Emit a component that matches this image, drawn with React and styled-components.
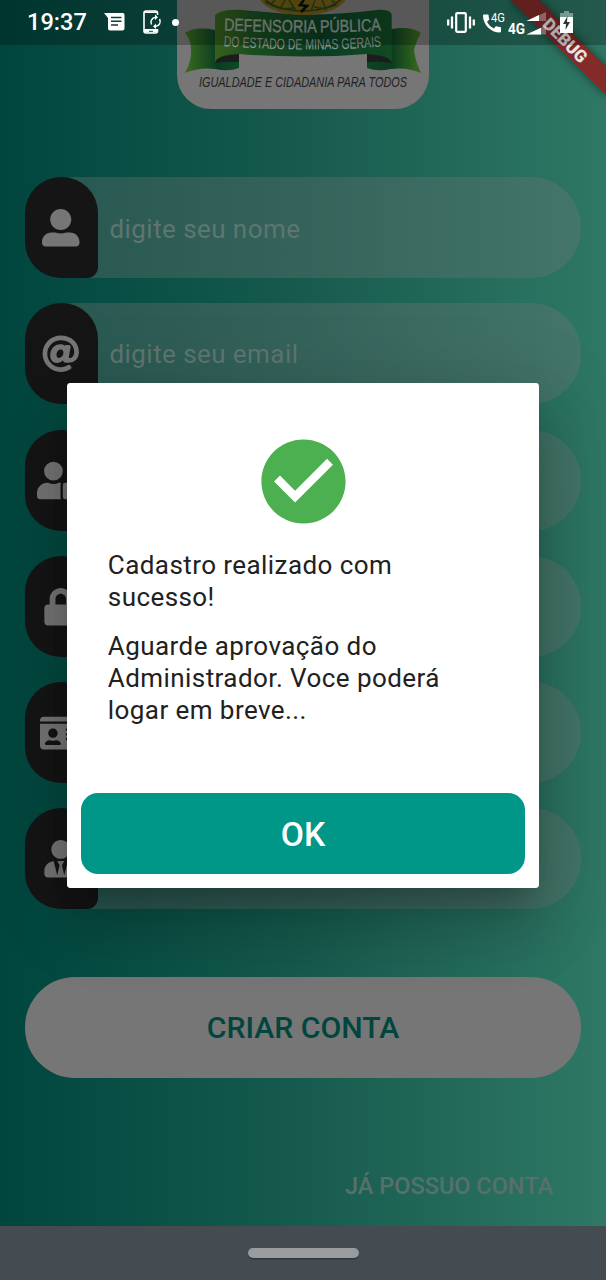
import React from "react";
import styled, { createGlobalStyle } from "styled-components";
import { FaUserAlt, FaAt, FaUserLock, FaLock, FaIdCard, FaUserTie } from "react-icons/fa";
import { MdCheckCircle, MdCall } from "react-icons/md";

const GlobalStyle = createGlobalStyle`
  * { box-sizing: border-box; }
  body { margin: 0; font-family: Roboto, "Liberation Sans", sans-serif; }
  button { font-family: inherit; border: 0; padding: 0; }
  svg { display: block; flex: none; overflow: visible; }
`;

const Phone = styled.div`
  position: relative;
  width: 606px;
  height: 1280px;
  overflow: hidden;
  display: flex;
  flex-direction: column;
`;

const Screen = styled.main`
  height: 1226px;
  padding: 0 25px;
  display: flex;
  flex-direction: column;
  align-items: center;
  background: linear-gradient(90deg, #00463e 0%, #175b4e 50%, #2f7865 100%);
`;

const LogoCard = styled.div`
  width: 252px;
  height: 109px;
  overflow: hidden;
  border-radius: 0 0 34px 34px;
  background: #767676;
`;

const Form = styled.form`
  width: 100%;
  margin-top: 68px;
  display: flex;
  flex-direction: column;
  gap: 25.3px;
`;

const Field = styled.label`
  height: 101px;
  display: flex;
  align-items: center;
  border-radius: 50px;
  background: rgba(118, 118, 118, 0.32);
`;

const Prefix = styled.span`
  width: 72.5px;
  height: 101px;
  padding-right: 1px;
  display: flex;
  align-items: center;
  justify-content: center;
  border-radius: 36px 36px 11px 36px;
  background: #151515;
  color: #767676;
  font-size: ${(p) => p.$size || 37.5}px;
`;

const Placeholder = styled.span`
  margin-left: 12px;
  padding-top: ${(p) => p.$drop || 0}px;
  font-size: 26px;
  letter-spacing: 0.43px;
  line-height: 32px;
  color: #5f7570;
`;

const CreateButton = styled.button`
  width: 100%;
  height: 101px;
  margin-top: 68px;
  border-radius: 50px;
  background: #767676;
  color: #00463e;
  font-size: 30.2px;
  font-weight: 500;
`;

const LoginLink = styled.button`
  align-self: flex-end;
  margin: 94px 28px 0 0;
  background: none;
  color: #58706c;
  font-size: 23.5px;
  font-weight: 500;
  line-height: 28px;
`;

const NavBar = styled.div`
  height: 54px;
  display: flex;
  align-items: center;
  justify-content: center;
  background: #444c52;
`;

const NavPill = styled.div`
  width: 111px;
  height: 10px;
  border-radius: 5px;
  background: #989c9f;
  box-shadow: 0 1.5px 0 #30363b;
`;

const Dialog = styled.section`
  position: absolute;
  top: 383px;
  left: 67.3px;
  width: 471.4px;
  height: 504.5px;
  padding: 48px 13.5px 13.5px;
  display: flex;
  flex-direction: column;
  border-radius: 3.4px;
  background: #fff;
  box-shadow: 0 18.5px 25px -11.8px rgba(0, 0, 0, 0.2),
    0 40px 64px 5px rgba(0, 0, 0, 0.14), 0 15px 77px 13.5px rgba(0, 0, 0, 0.12);
`;

const CheckMark = styled(MdCheckCircle)`
  align-self: center;
  margin-left: 0.5px;
  width: 101px;
  height: 101px;
  color: #4caf50;
`;

const Message = styled.div`
  margin: 17px 27px 0;
  display: flex;
  flex-direction: column;
  gap: 17px;
`;

const Line = styled.p`
  margin: 0;
  font-size: 26px;
  letter-spacing: 0.43px;
  line-height: 32px;
  color: #212121;
`;

const OkButton = styled.button`
  margin-top: auto;
  height: 81px;
  padding-top: 2px;
  border-radius: 17px;
  background: #009688;
  color: #fff;
  font-size: 33.7px;
  font-weight: 500;
`;

const StatusBar = styled.header`
  position: absolute;
  top: 0;
  left: 0;
  width: 606px;
  height: 44.5px;
  padding: 0 33px 0 27px;
  display: flex;
  align-items: center;
  background: rgba(0, 0, 0, 0.25);
  color: #fff;
`;

const Clock = styled.span`
  width: 60px;
  font-size: 23.6px;
  font-weight: 500;
  line-height: 28px;
`;

const StatusGroup = styled.div`
  display: flex;
  align-items: center;
  height: 44px;
  margin-left: ${(p) => p.$left}px;
  gap: ${(p) => p.$gap}px;
`;

const Dot = styled.i`
  width: 7px;
  height: 7px;
  border-radius: 50%;
  background: #fff;
`;

const DebugBanner = styled.div`
  position: absolute;
  top: 0;
  right: 0;
  width: 134.6px;
  height: 20.2px;
  transform-origin: 100% 0;
  transform: rotate(45deg) translate(67.3px, 47.1px);
  display: flex;
  align-items: center;
  justify-content: center;
  background: rgba(145, 30, 32, 0.86);
  box-shadow: 0 0 10px rgba(0, 0, 0, 0.5);
  color: #e9e3e3;
  font-size: 17.2px;
  font-weight: 900;
`;

function Emblem() {
  return (
    <svg width="252" height="109" viewBox="0 0 252 109">
      <defs>
        <linearGradient id="ribbon">
          <stop offset="0" stopColor="#38601c" />
          <stop offset=".22" stopColor="#1a4c20" />
          <stop offset=".6" stopColor="#0a3d22" />
          <stop offset="1" stopColor="#124a24" />
        </linearGradient>
        <linearGradient id="tailLeft">
          <stop offset="0" stopColor="#3b6b1e" />
          <stop offset=".6" stopColor="#0a3c20" />
          <stop offset="1" stopColor="#0e4a26" />
        </linearGradient>
        <linearGradient id="tailRight">
          <stop offset="0" stopColor="#0d4425" />
          <stop offset=".45" stopColor="#0a3c20" />
          <stop offset="1" stopColor="#3b6b1e" />
        </linearGradient>
        <path id="arcTop" d="M47 30.500Q86 32 126 32.300T206 30.500" />
        <path id="arcLow" d="M46.500 46.300Q86 49 126 49.500T206 46.300" />
      </defs>
      <path d="M8 33Q18 26 38 30L62 55V68Q52 72 38 69Q22 67 8 73Q15 60 14 50Q14 40 8 33Z" fill="url(#tailLeft)" />
      <path d="M244 33Q234 26 215 29L190 55V68Q200 72 214 69Q230 67 244 73Q238 60 237 50Q239 41 244 33Z" fill="url(#tailRight)" />
      <path d="M38.500 62Q40 56 62 54V62Q50 61 38.500 63Z" fill="#1d1c1c" />
      <path d="M214.500 62Q212 56 190 54V62Q202 61 214.500 63Z" fill="#1d1c1c" />
      <path d="M38 15Q44 9 66 10Q96 13 126 15Q170 14 200 10Q212 9 214.700 14V62Q210 54 190 54Q160 56.500 126 56.500Q92 56.500 62 54Q41 54 38 62Z" fill="url(#ribbon)" />
      <ellipse cx="126" cy="-5" rx="44" ry="20" fill="#705a14" />
      <ellipse cx="126" cy="-8" rx="41" ry="19" fill="none" stroke="#1d3b18" strokeWidth="1.500" />
      <path d="M88 2L101 8M98 0L93 5M108 0L103 9L118 8M112 0L119 11M138 0L134 11M145 0L149 9L137 7M155 0L159 5L149 8" fill="none" stroke="#24421a" strokeWidth="1.500" />
      <path d="M127 0L123 5L130 6L124 12" fill="none" stroke="#0b0b08" strokeWidth="2.600" />
      <g fill="#8d9a91" fontFamily='"Liberation Sans", Arial, sans-serif'>
        <text fontSize="17.500" stroke="#8d9a91" strokeWidth=".4">
          <textPath href="#arcTop" textLength="157" lengthAdjust="spacingAndGlyphs">DEFENSORIA PÚBLICA</textPath>
        </text>
        <text fontSize="15">
          <textPath href="#arcLow" textLength="158" lengthAdjust="spacingAndGlyphs">DO ESTADO DE MINAS GERAIS</textPath>
        </text>
      </g>
      <text x="22" y="87" fontSize="14" fontStyle="italic" fontFamily='"Liberation Sans", Arial, sans-serif' fill="#222" textLength="208" lengthAdjust="spacingAndGlyphs">
        IGUALDADE E CIDADANIA PARA TODOS
      </text>
    </svg>
  );
}

function ChatIcon() {
  return (
    <svg width="21" height="18" viewBox="0 0 21 18">
      <path d="M0 0H19Q20.500 0 20.500 2V15.500Q20.500 17.500 18.500 17.500H6Q4 17.500 4 15.500V5Z" fill="#fff" />
      <path d="M7 4.500H17.500M7 8.200H17.500M7 12H14" stroke="#0a4138" strokeWidth="1.400" />
    </svg>
  );
}

function PhoneSyncIcon() {
  return (
    <svg width="19" height="24" viewBox="0 0 19 24">
      <path d="M14.500 5V3Q14.500 1 12.500 1H3Q1 1 1 3V21Q1 23 3 23H12.500Q14.500 23 14.500 21V19" fill="none" stroke="#fff" strokeWidth="1.600" />
      <path d="M1 1.500H14.500V3H1ZM1 19H14.500V22.500H1Z" fill="#fff" />
      <path d="M6 21.300H10" stroke="#0a4138" strokeWidth="1" />
      <path d="M8.500 14.500A5 5 0 0 1 12.500 7.200M16.500 9A5 5 0 0 1 12.500 16.500" fill="none" stroke="#fff" strokeWidth="1.500" />
      <path d="M12 4.500L15 7.300L12 10ZM13 13.500L10 16.400L13 19Z" fill="#fff" />
    </svg>
  );
}

function VibrateIcon() {
  return (
    <svg width="28" height="21" viewBox="0 0 28 21">
      <rect x="9.200" y="1.200" width="9.600" height="18.600" rx="1" fill="none" stroke="#fff" strokeWidth="2.200" />
      <path d="M1.200 7.500V13.500M5 4.500V16.500M23 4.500V16.500M26.800 7.500V13.500" stroke="#fff" strokeWidth="2.300" />
    </svg>
  );
}

function CallSignal() {
  return (
    <svg width="24" height="24" viewBox="0 0 24 24">
      <MdCall x="-3" y="1.500" size="24" color="#fff" />
      <text x="8" y="12" fontSize="13" fontFamily="Roboto, sans-serif" fill="#fff" textLength="14" lengthAdjust="spacingAndGlyphs">
        4G
      </text>
    </svg>
  );
}

function NetworkSignal() {
  return (
    <svg width="40" height="26" viewBox="0 0 40 26">
      <text x="0" y="24.500" fontSize="14" fontFamily="Roboto, sans-serif" fontWeight="700" fill="#fff" textLength="17" lengthAdjust="spacingAndGlyphs">
        4G
      </text>
      <path d="M18.500 12L38 3V12ZM18.500 25.500L38 16.500V25.500Z" fill="#fff" opacity=".3" />
      <path d="M18.500 12L31 6V12ZM18.500 25.500L33 18.800V25.500Z" fill="#fff" />
    </svg>
  );
}

function BatteryIcon() {
  return (
    <svg width="13" height="22" viewBox="0 0 13 22">
      <path d="M4 0H9V2H13V7H0V2H4Z" fill="#fff" opacity=".4" />
      <path d="M0 6H13V22H0Z" fill="#fff" />
      <path d="M7.500 5L3 13H6L5.500 19L10 11H7Z" fill="#2c3a34" />
    </svg>
  );
}

const fields = [
  { icon: <FaUserAlt />, text: "digite seu nome", drop: 3 },
  { icon: <FaAt />, text: "digite seu email" },
  { icon: <FaUserLock />, size: 47 },
  { icon: <FaLock /> },
  { icon: <FaIdCard />, size: 42.3 },
  { icon: <FaUserTie /> },
];

export default function App() {
  return (
    <Phone>
      <GlobalStyle />
      <Screen>
        <LogoCard>
          <Emblem />
        </LogoCard>
        <Form>
          {fields.map((f, i) => (
            <Field key={i}>
              <Prefix $size={f.size}>{f.icon}</Prefix>
              {f.text && <Placeholder $drop={f.drop}>{f.text}</Placeholder>}
            </Field>
          ))}
        </Form>
        <CreateButton>CRIAR CONTA</CreateButton>
        <LoginLink>JÁ POSSUO CONTA</LoginLink>
      </Screen>
      <NavBar>
        <NavPill />
      </NavBar>
      <Dialog>
        <CheckMark />
        <Message>
          <Line>Cadastro realizado com sucesso!</Line>
          <Line>Aguarde aprovação do Administrador. Voce poderá logar em breve...</Line>
        </Message>
        <OkButton>OK</OkButton>
      </Dialog>
      <DebugBanner>DEBUG</DebugBanner>
      <StatusBar>
        <Clock>19:37</Clock>
        <StatusGroup $left={17} $gap={18}>
          <ChatIcon />
          <PhoneSyncIcon />
        </StatusGroup>
        <StatusGroup $left={9.5} $gap={0}>
          <Dot />
        </StatusGroup>
        <StatusGroup $left={268.5} $gap={8}>
          <VibrateIcon />
          <CallSignal />
        </StatusGroup>
        <StatusGroup $left={1} $gap={11.5}>
          <NetworkSignal />
          <BatteryIcon />
        </StatusGroup>
      </StatusBar>
    </Phone>
  );
}
